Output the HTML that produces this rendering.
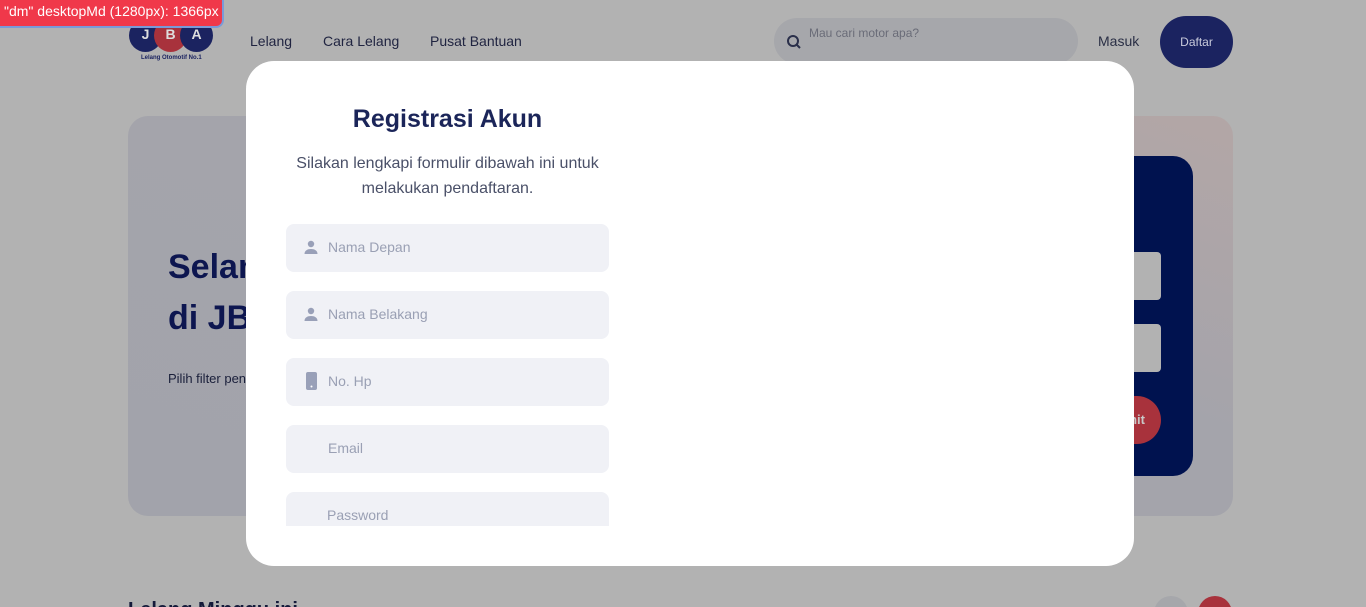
<!DOCTYPE html>
<html><head><meta charset="utf-8"><style>
*{margin:0;padding:0;box-sizing:border-box}
html,body{width:1366px;height:607px;overflow:hidden}
body{background:#b2b2b2;font-family:"Liberation Sans",Roboto,sans-serif;position:relative}
.abs{position:absolute}
.nav{color:#1f2340;font-size:14px;top:33px}
.inp{position:absolute;left:286px;width:323px;height:48px;background:#f0f1f6;border-radius:8px;color:#9aa0b4;font-size:14px}
.inp span{position:absolute;left:42px;top:15px}
.inp svg{position:absolute;left:17px;top:15px}
</style></head><body>
<!-- logo -->
<div class="abs" style="left:129px;top:19px;width:33px;height:33px;border-radius:50%;background:#1b2360;color:#ddd;font-size:14px;font-weight:bold;text-align:center;line-height:30px">J</div>
<div class="abs" style="left:154px;top:19px;width:33px;height:33px;border-radius:50%;background:#a8323c;color:#ddd;font-size:14px;font-weight:bold;text-align:center;line-height:30px">B</div>
<div class="abs" style="left:180px;top:19px;width:33px;height:33px;border-radius:50%;background:#1b2360;color:#ddd;font-size:14px;font-weight:bold;text-align:center;line-height:30px">A</div>
<div class="abs" style="left:141px;top:55px;font-size:6px;color:#1b2360;font-weight:bold">Lelang Otomotif No.1</div>
<div class="abs nav" style="left:250px">Lelang</div>
<div class="abs nav" style="left:323px">Cara Lelang</div>
<div class="abs nav" style="left:430px">Pusat Bantuan</div>
<div class="abs" style="left:774px;top:18px;width:304px;height:46px;border-radius:23px;background:#a6a7ab"></div>
<svg class="abs" style="left:786px;top:34px" width="16" height="16" viewBox="0 0 16 16"><circle cx="7" cy="7" r="5" fill="none" stroke="#2a2f4a" stroke-width="2"/><path d="M10.5 10.5L14 14" stroke="#2a2f4a" stroke-width="2"/></svg>
<div class="abs" style="left:809px;top:26px;font-size:12px;color:#6a6c78">Mau cari motor apa?</div>
<div class="abs" style="left:1098px;top:33px;font-size:14px;color:#2a2f45">Masuk</div>
<div class="abs" style="left:1160px;top:16px;width:73px;height:52px;border-radius:26px;background:#1b2360;color:#c8cadb;font-size:12px;text-align:center;line-height:52px">Daftar</div>
<!-- hero -->
<div class="abs" style="left:128px;top:116px;width:1105px;height:400px;border-radius:20px;background:linear-gradient(200deg,#b3a6a6,#a4a4ab 40%,#a2a3ab)"></div>
<div class="abs" style="left:168px;top:242px;font-size:34px;font-weight:bold;color:#0d1650;line-height:51px">Selamat<br>di JBA</div>
<div class="abs" style="left:168px;top:371px;font-size:13px;color:#1a1f3a">Pilih filter pencarian</div>
<div class="abs" style="left:1000px;top:156px;width:193px;height:320px;border-radius:20px;background:#00124f"></div>
<div class="abs" style="left:1100px;top:252px;width:61px;height:48px;border-radius:4px;background:#b2b2b2"></div>
<div class="abs" style="left:1100px;top:324px;width:61px;height:48px;border-radius:4px;background:#b2b2b2"></div>
<div class="abs" style="left:1100px;top:396px;width:61px;height:48px;border-radius:24px;background:#a8323c;color:#c8c8c8;font-size:13px;font-weight:bold;line-height:48px;text-align:right;padding-right:16px">mit</div>
<div class="abs" style="left:128px;top:599px;font-size:20px;font-weight:bold;color:#141a3a">Lelang Minggu ini</div>
<div class="abs" style="left:1154px;top:596px;width:34px;height:34px;border-radius:50%;background:#a6a7ab"></div>
<div class="abs" style="left:1198px;top:596px;width:34px;height:34px;border-radius:50%;background:#a8323c"></div>
<!-- modal -->
<div class="abs" style="left:246px;top:61px;width:888px;height:505px;border-radius:28px;background:#fff"></div>
<div class="abs" style="left:286px;top:105px;width:323px;text-align:center;font-size:25px;font-weight:bold;color:#1b2559">Registrasi Akun</div>
<div class="abs" style="left:286px;top:151px;width:323px;text-align:center;font-size:16px;line-height:25px;color:#4a5068">Silakan lengkapi formulir dibawah ini untuk melakukan pendaftaran.</div>
<div class="inp" style="top:224px"><svg width="16" height="16" viewBox="0 0 16 16"><circle cx="8" cy="5" r="3.2" fill="#99a0b8"/><path d="M1.5 15c0-3.5 3-5 6.5-5s6.5 1.5 6.5 5z" fill="#99a0b8"/></svg><span>Nama Depan</span></div>
<div class="inp" style="top:291px"><svg width="16" height="16" viewBox="0 0 16 16"><circle cx="8" cy="5" r="3.2" fill="#99a0b8"/><path d="M1.5 15c0-3.5 3-5 6.5-5s6.5 1.5 6.5 5z" fill="#99a0b8"/></svg><span>Nama Belakang</span></div>
<div class="inp" style="top:358px"><svg width="16" height="18" viewBox="0 0 16 18" style="top:14px"><rect x="3" y="0" width="11" height="18" rx="2" fill="#99a0b8"/><circle cx="8.5" cy="14.5" r="1" fill="#fff"/></svg><span>No. Hp</span></div>
<div class="inp" style="top:425px"><span>Email</span></div>
<div class="inp" style="top:492px;height:34px;border-radius:8px 8px 0 0"><span style="left:41px">Password</span></div>
<!-- badge -->
<div class="abs" style="left:0;top:-2px;width:224px;height:30px;border-radius:0 0 8px 0;background:#f0384a;border:2px solid #7a9ad8;border-top:none;border-left:none;color:#fff;font-size:14px;line-height:26px;padding-left:4px">"dm" desktopMd (1280px): 1366px</div>
</body></html>
